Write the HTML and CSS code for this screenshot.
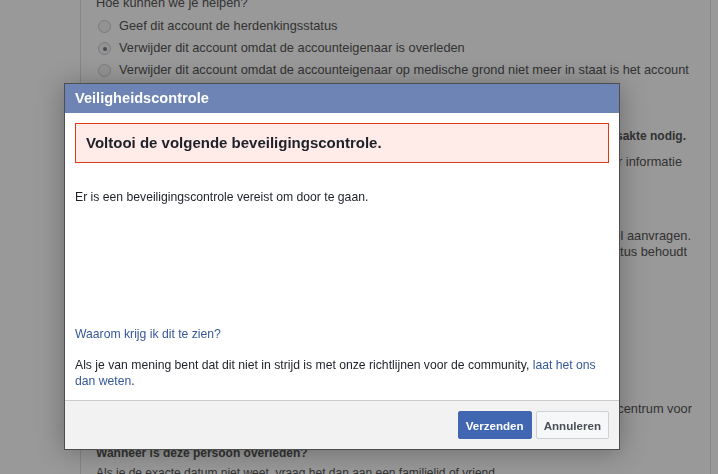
FILE: index.html
```html
<!DOCTYPE html>
<html lang="nl">
<head>
<meta charset="utf-8">
<title>Veiligheidscontrole</title>
<link rel="stylesheet" href="styles.css">
</head>
<body>
<div class="page">
  <div class="card">
    <div class="q-title">Hoe kunnen we je helpen?</div>
    <div class="options">
      <div class="opt"><span class="radio"></span><span>Geef dit account de herdenkingsstatus</span></div>
      <div class="opt"><span class="radio checked"></span><span>Verwijder dit account omdat de accounteigenaar is overleden</span></div>
      <div class="opt"><span class="radio"></span><span>Verwijder dit account omdat de accounteigenaar op medische grond niet meer in staat is het account te beheren</span></div>
    </div>
    <div class="tail small-bold m-a e14">We hebben een bewijs van overlijden, zoals een kopie van de overlijdensakte nodig.</div>
    <div class="tail m-b e18">Bekijk het Helpcentrum voor meer informatie</div>
    <div class="tail m-c e9">Als je een naast familielid bent, kun je ook een herdenkingsprofiel aanvragen.</div>
    <div class="tail e13">Een account met de herdenkingsstatus behoudt</div>
    <div class="tail m-d e8">Lees meer in het Helpcentrum voor</div>
    <div class="small bold m-e">Wanneer is deze persoon overleden?</div>
    <div class="small m-f">Als je de exacte datum niet weet, vraag het dan aan een familielid of vriend.</div>
  </div>
</div>

<div class="overlay"></div>

<div class="dialog" role="dialog">
  <div class="dlg-title">Veiligheidscontrole</div>
  <div class="dlg-body">
    <div class="error">Voltooi de volgende beveiligingscontrole.</div>
    <div class="msg">Er is een beveiligingscontrole vereist om door te gaan.</div>
    <div class="captcha"></div>
    <a class="link" href="#">Waarom krijg ik dit te zien?</a>
    <div class="note">Als je van mening bent dat dit niet in strijd is met onze richtlijnen voor de community, <a class="link" href="#">laat het ons dan weten</a>.</div>
  </div>
  <div class="dlg-footer">
    <button class="btn primary">Verzenden</button>
    <button class="btn cancel">Annuleren</button>
  </div>
</div>
</body>
</html>
```

FILE: styles.css
```css
* { box-sizing: border-box; }
html, body { margin: 0; padding: 0; height: 100%; overflow: hidden; }
body {
  background: #fff;
  font-family: "Liberation Sans", Arial, sans-serif;
  color: #1d2129;
}
.page {
  height: 100%;
  padding-left: 80px;
  padding-right: 7px;
}
.card {
  height: 100%;
  border-left: 1px solid #dddfe2;
  border-right: 1px solid #dddfe2;
  padding: 0 10px 0 15px;
  font-size: 12.8px;
  line-height: 16px;
  color: #555;
  display: flex;
  flex-direction: column;
}
.card > * { flex: none; }
.q-title { margin-top: -6px; line-height: 18px; }
.options {
  display: flex;
  flex-direction: column;
  gap: 4px;
  margin-top: 5px;
  line-height: 18px;
}
.opt {
  display: flex;
  align-items: flex-start;
  gap: 8px;
  padding-left: 2px;
}
.radio {
  flex: none;
  width: 13px;
  height: 13px;
  margin-top: 3px;
  border: 1px solid #c7cbd1;
  border-radius: 50%;
  background: #f5f6f7;
  position: relative;
}
.radio.checked::after {
  content: "";
  position: absolute;
  left: 3.5px;
  top: 3.5px;
  width: 4px;
  height: 4px;
  border-radius: 50%;
  background: #7a7d82;
}
.tail { white-space: nowrap; text-align: right; overflow: hidden; }
.bold { font-weight: bold; }
.small-bold { font-weight: bold; font-size: 12px; }
.small { font-size: 12px; white-space: nowrap; }
.e8 { margin-right: 8px; }
.e9 { margin-right: 9px; }
.e13 { margin-right: 13px; }
.e14 { margin-right: 14px; }
.e18 { margin-right: 18px; }
.m-a { margin-top: 31px; }
.m-b { margin-top: 10px; }
.m-c { margin-top: 58px; }
.m-d { margin-top: 141px; }
.m-e { margin-top: 28px; }
.m-f { margin-top: 4px; }

.overlay {
  position: fixed;
  inset: 0;
  background: rgba(0, 0, 0, 0.4);
}

.dialog {
  position: absolute;
  left: 64px;
  top: 83px;
  width: 556px;
  border: 1px solid #4e4e4e;
  background: #fff;
  box-shadow: 0 2px 26px rgba(0, 0, 0, 0.3);
  font-size: 12.2px;
  line-height: 16px;
  color: #1d2129;
}
.dlg-title {
  height: 29px;
  line-height: 29px;
  padding-left: 10px;
  background: #6d84b4;
  color: #fff;
  font-size: 14.6px;
  font-weight: bold;
}
.dlg-body {
  padding: 10px 10px 11px;
  display: flex;
  flex-direction: column;
  align-items: flex-start;
}
.error {
  align-self: stretch;
  height: 40px;
  line-height: 38px;
  padding: 0 10px;
  border: 1px solid #dd3c10;
  background: #ffebe8;
  font-size: 15px;
  font-weight: bold;
  color: #1d2129;
}
.msg { margin-top: 26px; }
.captcha { height: 121px; }
.link { color: #365899; text-decoration: none; }
.note { margin-top: 15px; }
.dlg-footer {
  border-top: 1px solid #ccc;
  background: #f2f2f2;
  padding: 10px;
  display: flex;
  justify-content: flex-end;
  gap: 4px;
}
.btn {
  height: 28px;
  padding: 0 7px;
  border: 1px solid #ced0d4;
  border-radius: 2px;
  background: #f6f7f9;
  color: #4b4f56;
  font-family: "Liberation Sans", Arial, sans-serif;
  font-size: 11.6px;
  font-weight: bold;
  cursor: pointer;
}
.btn.cancel { padding: 0 7px; }
.btn.primary {
  background: #4267b2;
  border-color: #4267b2;
  color: #fff;
}
```
